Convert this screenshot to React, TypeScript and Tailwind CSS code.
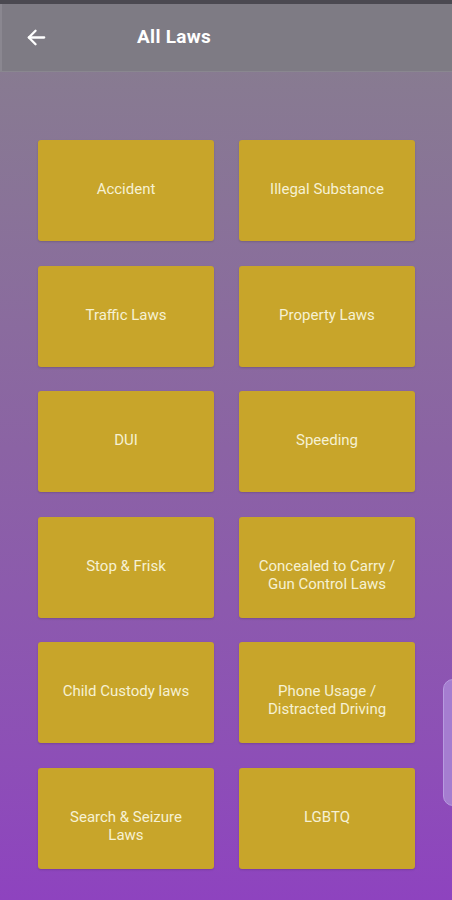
import React from "react";

const items: string[][] = [
  ["Accident", "Illegal Substance"],
  ["Traffic Laws", "Property Laws"],
  ["DUI", "Speeding"],
  ["Stop & Frisk", "Concealed to Carry /\nGun Control Laws"],
  ["Child Custody laws", "Phone Usage /\nDistracted Driving"],
  ["Search & Seizure\nLaws", "LGBTQ"],
];

export default function App() {
  return (
    <div
      className="relative w-[452px] h-[900px] overflow-hidden bg-gradient-to-b from-[#877f8d] via-[#8b63a4] to-[#8e43bf]"
      style={{ fontFamily: "Roboto, 'Liberation Sans', sans-serif" }}
    >
      <div className="h-[4px] bg-[#4b4951]" />
      <div className="h-[68px] bg-[#7e7b84] border-l-2 border-b border-[#8a8790] flex items-center">
        <svg className="ml-[23px]" width="23" height="23" viewBox="0 0 24 24" fill="none" stroke="#ffffff" strokeWidth="2.4" strokeLinecap="round" strokeLinejoin="round">
          <path d="M20 12H4" />
          <path d="M11 5l-7 7 7 7" />
        </svg>
        <div className="ml-[89px] text-white text-[19px] font-bold tracking-[0.3px]">All Laws</div>
      </div>
      <div className="grid grid-cols-[176px_176px] gap-x-[25px] gap-y-[24.6px] pl-[38px] pt-[68px]">
        {items.flat().map((t) => (
          <div
            key={t}
            className="h-[101px] rounded-[3px] bg-[#c8a52a] pt-[40px] text-center text-[15px] leading-[18px] text-[#f6f1d3] whitespace-pre-line shadow-[0_1px_2px_rgba(0,0,0,0.15)]"
          >
            {t}
          </div>
        ))}
      </div>
      <div className="absolute right-[-12px] top-[679px] w-[21px] h-[127px] rounded-[10px] bg-[#a57dd0] border border-[#b79be0]" />
    </div>
  );
}
